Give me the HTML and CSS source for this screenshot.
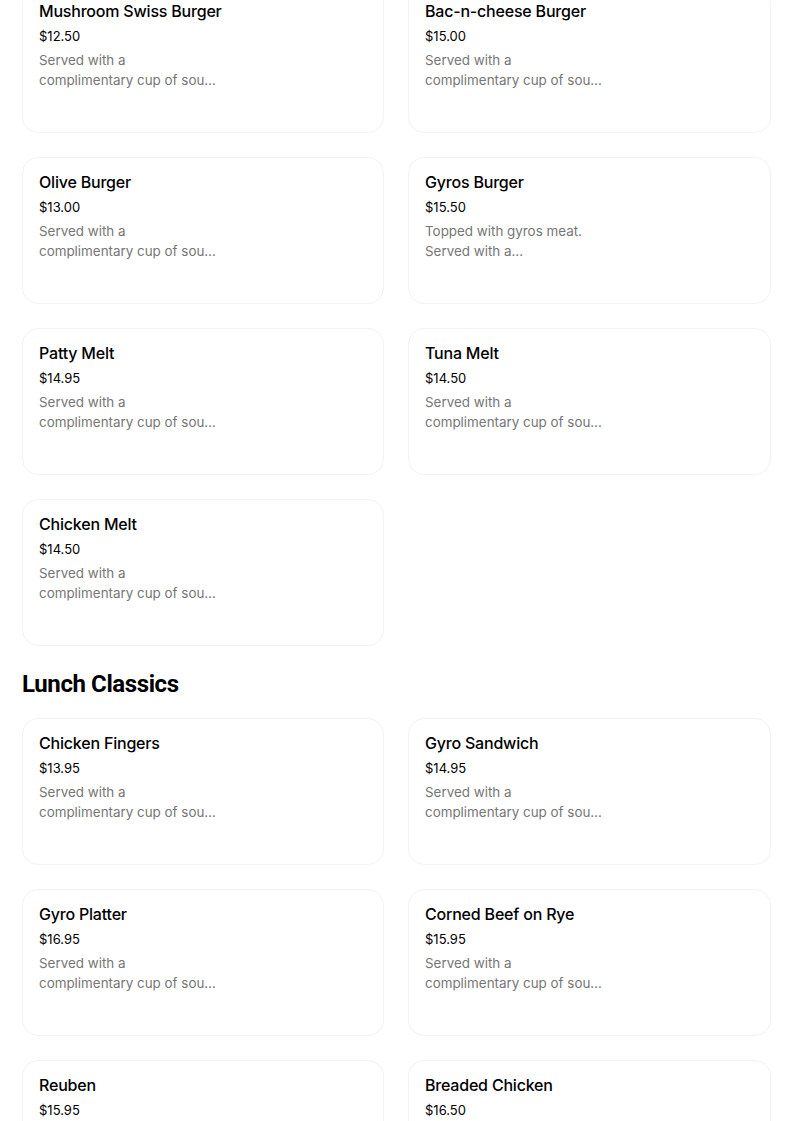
FILE: index.html
```html
<!DOCTYPE html>
<html lang="en">
<head>
<meta charset="utf-8">
<title>Menu</title>
<link rel="stylesheet" href="styles.css">
</head>
<body>
<main class="page">
  <section class="section section-first">
    <div class="grid">
      <div class="card"><div class="name">Mushroom Swiss Burger</div><div class="price">$12.50</div><div class="desc">Served with a<br>complimentary cup of sou…</div></div>
      <div class="card"><div class="name">Bac-n-cheese Burger</div><div class="price">$15.00</div><div class="desc">Served with a<br>complimentary cup of sou…</div></div>
      <div class="card"><div class="name">Olive Burger</div><div class="price">$13.00</div><div class="desc">Served with a<br>complimentary cup of sou…</div></div>
      <div class="card"><div class="name">Gyros Burger</div><div class="price">$15.50</div><div class="desc">Topped with gyros meat.<br>Served with a…</div></div>
      <div class="card"><div class="name">Patty Melt</div><div class="price">$14.95</div><div class="desc">Served with a<br>complimentary cup of sou…</div></div>
      <div class="card"><div class="name">Tuna Melt</div><div class="price">$14.50</div><div class="desc">Served with a<br>complimentary cup of sou…</div></div>
      <div class="card"><div class="name">Chicken Melt</div><div class="price">$14.50</div><div class="desc">Served with a<br>complimentary cup of sou…</div></div>
    </div>
  </section>
  <section class="section">
    <h2 class="heading">Lunch Classics</h2>
    <div class="grid">
      <div class="card"><div class="name">Chicken Fingers</div><div class="price">$13.95</div><div class="desc">Served with a<br>complimentary cup of sou…</div></div>
      <div class="card"><div class="name">Gyro Sandwich</div><div class="price">$14.95</div><div class="desc">Served with a<br>complimentary cup of sou…</div></div>
      <div class="card"><div class="name">Gyro Platter</div><div class="price">$16.95</div><div class="desc">Served with a<br>complimentary cup of sou…</div></div>
      <div class="card"><div class="name">Corned Beef on Rye</div><div class="price">$15.95</div><div class="desc">Served with a<br>complimentary cup of sou…</div></div>
      <div class="card"><div class="name">Reuben</div><div class="price">$15.95</div><div class="desc">Served with a<br>complimentary cup of sou…</div></div>
      <div class="card"><div class="name">Breaded Chicken</div><div class="price">$16.50</div><div class="desc">Served with a<br>complimentary cup of sou…</div></div>
    </div>
  </section>
</main>
</body>
</html>
```
FILE: styles.css
```css
html, body {
  margin: 0;
  padding: 0;
  background: #ffffff;
}
body {
  font-family: Inter, "Liberation Sans", sans-serif;
  color: #000000;
  overflow: hidden;
}
.page {
  width: 749px;
  padding-left: 22px;
}
.section-first {
  margin-top: -14px;
}
.grid {
  display: grid;
  grid-template-columns: 362px 363px;
  column-gap: 24px;
  row-gap: 24px;
}
.card {
  box-sizing: border-box;
  height: 147px;
  border: 1px solid #f2f2f2;
  border-radius: 16px;
  padding: 14px 16px;
}
.name {
  font-size: 16px;
  line-height: 20px;
  font-weight: 500;
  letter-spacing: -0.2px;
  color: #000000;
}
.price {
  margin-top: 5px;
  font-size: 13px;
  line-height: 20px;
  color: #000000;
}
.desc {
  margin-top: 4px;
  white-space: nowrap;
  font-size: 13.4px;
  line-height: 20px;
  color: #767676;
}
.heading {
  margin: 22px 0 18px;
  font-family: Roboto, Inter, sans-serif;
  font-size: 24px;
  line-height: 32px;
  font-weight: 700;
  letter-spacing: -0.4px;
}
```
